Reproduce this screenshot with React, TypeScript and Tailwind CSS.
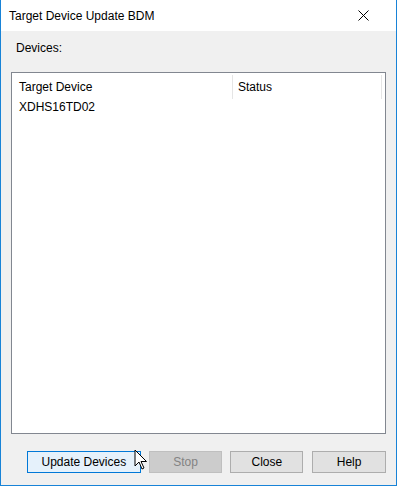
export default function App() {
  const font = { fontFamily: '"Liberation Sans", Arial, sans-serif' };
  return (
    <div
      className="w-[397px] h-[486px] flex flex-col border-x border-b border-[#1883d7] bg-[#f0f0f0] text-[12px] text-black overflow-hidden"
      style={font}
    >
      {/* title bar */}
      <div className="h-[31px] bg-white flex items-center justify-between pl-[8px] pr-[27px] shrink-0">
        <span className="text-[12px] leading-none">Target Device Update BDM</span>
        <svg width="11" height="11" viewBox="0 0 11 11" className="block">
          <path d="M0.5 0.5 L10.5 10.5 M10.5 0.5 L0.5 10.5" stroke="#000" strokeWidth="1" />
        </svg>
      </div>

      <div className="flex-1 flex flex-col px-[10px]">
        <div className="pl-[5px] pt-[8px] h-[41px] leading-[18px]">Devices:</div>

        {/* list view */}
        <div className="h-[362px] border border-[#828790] bg-white flex flex-col">
          <div className="flex h-[26px] pt-[2px]">
            <div className="w-[221px] pl-[7px] flex items-center border-r border-[#e5e5e5]">Target Device</div>
            <div className="w-[149px] pl-[5px] flex items-center border-r border-[#e5e5e5]">Status</div>
          </div>
          <div className="flex h-[16px] items-center pl-[7px]">XDHS16TD02</div>
        </div>

        {/* buttons */}
        <div className="flex pt-[17px] pl-[16px] gap-[8px] relative">
          <button className="w-[114px] h-[22px] border border-[#0078d7] bg-[#e5f1fb] leading-none">Update Devices</button>
          <button className="w-[74px] h-[22px] border border-[#bfbfbf] bg-[#cccccc] text-[#838383] leading-none">Stop</button>
          <button className="w-[73px] h-[22px] border border-[#adadad] bg-[#e1e1e1] leading-none">Close</button>
          <button className="w-[74px] h-[22px] border border-[#adadad] bg-[#e1e1e1] leading-none ml-[1px]">Help</button>
          <svg
            width="14"
            height="22"
            viewBox="0 0 14 22"
            className="absolute left-[123px] top-[15px]"
          >
            <path
              d="M1 1 L1 17 L5 13 L8 20 L10 19 L7 12.5 L12.5 12.5 Z"
              fill="#fff"
              stroke="#000"
              strokeWidth="1"
              strokeLinejoin="miter"
            />
          </svg>
        </div>
      </div>
    </div>
  );
}
